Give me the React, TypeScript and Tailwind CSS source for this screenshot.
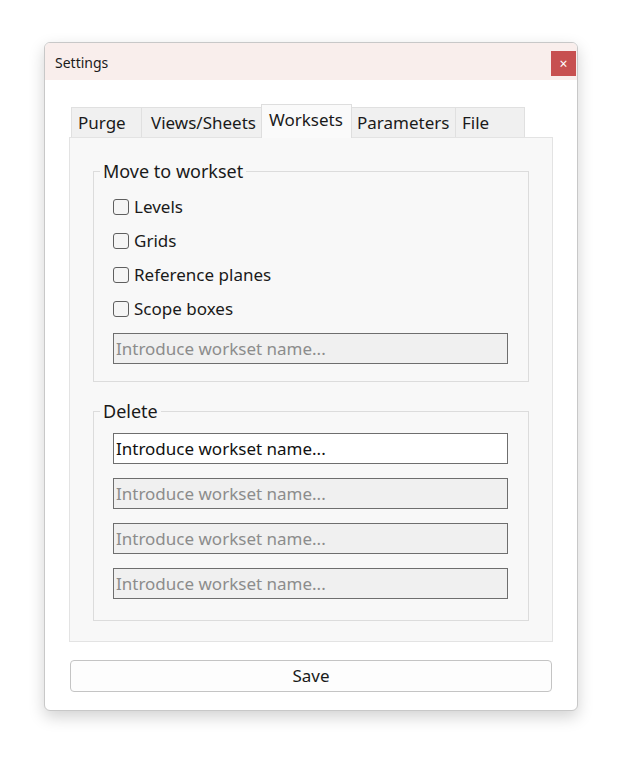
import * as React from "react";

const font = { fontFamily: '"Noto Sans", "Open Sans", sans-serif' };

function Check({ label }: { label: string }) {
  return (
    <label className="flex h-[34px] items-center gap-[5px] text-[17px] text-[#1a1a1a]">
      <span className="h-[16px] w-[16px] rounded-[3px] border border-[#5f5f5f] bg-[#f5f5f5]" />
      {label}
    </label>
  );
}

function Field({ enabled = false }: { enabled?: boolean }) {
  return (
    <div
      className={
        "flex h-[31px] w-[395px] items-center border border-[#6e6e6e] px-[2px] text-[17px] " +
        (enabled ? "bg-white text-[#111]" : "bg-[#f0f0f0] text-[#8c8c8c]")
      }
    >
      Introduce workset name...
    </div>
  );
}

const tabs = [
  { name: "Purge", w: "w-[71px]" },
  { name: "Views/Sheets", w: "w-[121px] pl-[9px]" },
  { name: "Worksets", w: "w-[91px]" },
  { name: "Parameters", w: "w-[105px] pl-[5px]" },
  { name: "File", w: "w-[70px] pl-[6px]" },
];

export default function App() {
  return (
    <div className="min-h-[757px] bg-white pl-[44px] pt-[42px]" style={font}>
      <div className="w-[534px] overflow-hidden rounded-[6px] border border-[#c8c8c8] bg-white shadow-[0_6px_16px_rgba(0,0,0,0.18)]">
        <div className="flex h-[37px] items-start justify-between bg-[#f9eeec] pl-[10px] pr-[1px]">
          <span className="mt-[9px] text-[14px] text-[#1a1a1a]">Settings</span>
          <button className="mt-[8px] flex h-[25px] w-[25px] items-center justify-center bg-[#c75050] text-[14px] leading-none text-white">
            ×
          </button>
        </div>

        <div className="px-[24px] pt-[24px] pb-[18px]">
          <div className="flex items-end pl-[2px]">
            {tabs.map((t, i) =>
              t.name === "Worksets" ? (
                <div
                  key={t.name}
                  className={
                    "relative z-10 -mb-px -ml-px flex h-[34px] items-center border border-b-0 border-[#dedede] bg-[#fafafa] pl-[7px] pb-[3px] text-[17px] text-[#1a1a1a] " +
                    t.w
                  }
                >
                  {t.name}
                </div>
              ) : (
                <div
                  key={t.name}
                  className={
                    "flex h-[30px] items-center border border-b-0 border-[#e0e0e0] bg-[#f0f0f0] text-[17px] text-[#1a1a1a] " +
                    (i === 0 ? "pl-[6px] " : "-ml-px ") +
                    t.w
                  }
                >
                  {t.name}
                </div>
              )
            )}
          </div>

          <div className="w-[484px] border border-[#e3e3e3] bg-[#f8f8f8] px-[23px] pt-[22px] pb-[20px]">
            <fieldset className="border border-[#dcdcdc] pb-[17px]">
              <legend className="ml-[6px] px-[3px] text-[18px] leading-[22px] text-[#1a1a1a]">
                Move to workset
              </legend>
              <div className="pl-[19px] pt-[8px]">
                <Check label="Levels" />
                <Check label="Grids" />
                <Check label="Reference planes" />
                <Check label="Scope boxes" />
              </div>
              <div className="mt-[7px] pl-[19px]">
                <Field />
              </div>
            </fieldset>

            <fieldset className="mt-[18px] border border-[#dcdcdc] pb-[21px]">
              <legend className="ml-[6px] px-[3px] text-[18px] leading-[22px] text-[#1a1a1a]">
                Delete
              </legend>
              <div className="flex flex-col gap-[14px] pl-[19px] pt-[11px]">
                <Field enabled />
                <Field />
                <Field />
                <Field />
              </div>
            </fieldset>
          </div>

          <button className="mt-[18px] ml-[1px] flex h-[32px] w-[482px] items-center justify-center rounded-[4px] border border-[#c4c4c4] bg-[#fdfdfd] text-[17px] text-[#1a1a1a]">
            Save
          </button>
        </div>
      </div>
    </div>
  );
}
